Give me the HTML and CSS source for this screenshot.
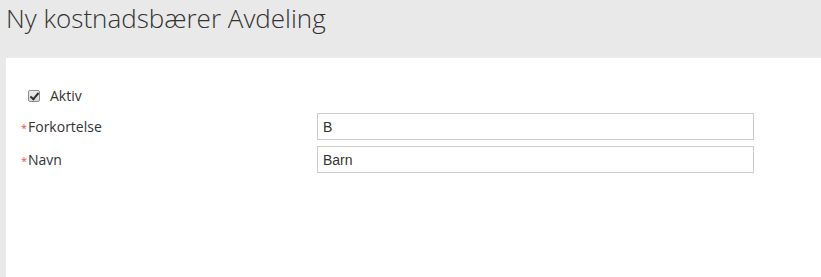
FILE: index.html
```html
<!DOCTYPE html>
<html lang="no">
<head>
<meta charset="utf-8">
<title>Ny kostnadsbærer Avdeling</title>
<link rel="stylesheet" href="styles.css">
</head>
<body>
<header class="page-header">
  <h1 class="page-title">Ny kostnadsbærer Avdeling</h1>
</header>
<main class="panel">
  <form class="form">
    <label class="check-row">
      <input type="checkbox" class="check" checked>
      <span class="check-label">Aktiv</span>
    </label>
    <div class="field">
      <label class="field-label" for="fork"><span class="req">*</span>Forkortelse</label>
      <input id="fork" class="text-input" type="text" value="B">
    </div>
    <div class="field">
      <label class="field-label" for="navn"><span class="req">*</span>Navn</label>
      <input id="navn" class="text-input" type="text" value="Barn">
    </div>
  </form>
</main>
</body>
</html>
```
FILE: styles.css
```css
html, body {
  margin: 0;
  padding: 0;
  height: 100%;
}
body {
  background: #e9e9e9;
  font-family: "Open Sans", "Liberation Sans", sans-serif;
  color: #333;
  display: flex;
  flex-direction: column;
}
.page-header {
  height: 58px;
  flex: none;
}
.page-title {
  margin: 0;
  padding-left: 6px;
  font-size: 26px;
  font-weight: 300;
  color: #333;
  line-height: 1.25;
  padding-top: 2px;
}
.panel {
  flex: 1;
  margin-left: 6px;
  background: #fff;
  padding: 27px 0 0 15px;
}
.form {
  display: flex;
  flex-direction: column;
  gap: 6px;
}
.check-row {
  display: flex;
  align-items: center;
  height: 21px;
  padding-left: 7px;
  margin-bottom: 1px;
  font-size: 14px;
  cursor: pointer;
}
.check {
  appearance: none;
  -webkit-appearance: none;
  margin: 0 10px 0 0;
  width: 12px;
  height: 12px;
  border: 1px solid #8f8f8f;
  border-radius: 2px;
  background: linear-gradient(#ededed, #d8d8d8);
  box-sizing: border-box;
  position: relative;
}
.check:checked::after {
  content: "";
  position: absolute;
  left: 3px;
  top: 0px;
  width: 3px;
  height: 7px;
  border: solid #333;
  border-width: 0 2px 2px 0;
  transform: rotate(40deg);
}
.check-label {
  color: #333;
}
.field {
  display: grid;
  grid-template-columns: 296px 437px;
  align-items: center;
  height: 27px;
}
.field-label {
  font-size: 14px;
  color: #333;
  display: flex;
  align-items: center;
}
.req {
  color: #d9534f;
  font-size: 11px;
  width: 7px;
  line-height: 1;
  position: relative;
  top: 1px;
}
.text-input {
  box-sizing: border-box;
  height: 27px;
  width: 437px;
  margin: 0;
  border: 1px solid #ccc;
  border-radius: 0;
  padding: 0 5px;
  font-family: "Liberation Sans", Arial, sans-serif;
  font-size: 14px;
  color: #333;
  background: #fff;
  outline: none;
}
```
